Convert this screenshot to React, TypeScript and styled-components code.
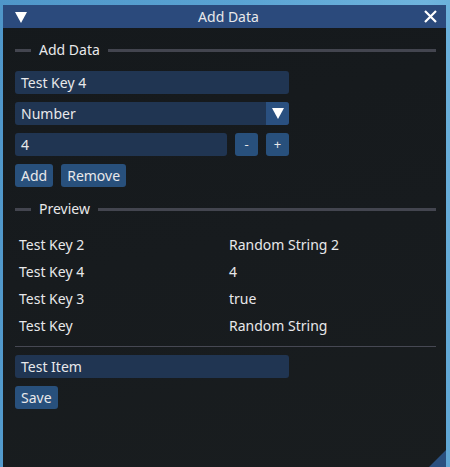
import styled, { createGlobalStyle } from "styled-components";

const GlobalStyle = createGlobalStyle`
  html, body {
    margin: 0;
    padding: 0;
    height: 100%;
    overflow: hidden;
  }
  body {
    background: linear-gradient(100deg, #4f96c9 0%, #5aa3d3 45%, #6fb4dd 80%, #5fa6d4 100%);
    font-family: "Noto Sans", "Open Sans", sans-serif;
    font-size: 14px;
    color: #e8e8ea;
  }
`;

type Row = { key: string; value: string };

const rows: Row[] = [
  { key: "Test Key 2", value: "Random String 2" },
  { key: "Test Key 4", value: "4" },
  { key: "Test Key 3", value: "true" },
  { key: "Test Key", value: "Random String" },
];

const DownArrow = ({ size = 12 }: { size?: number }) => (
  <svg width={size} height={size - 1} viewBox="0 0 12 11">
    <polygon points="0,0 12,0 6,11" fill="#ffffff" />
  </svg>
);

const App = () => {
  return (
    <>
      <GlobalStyle />
      <Desktop>
        <Window>
          <TitleBar>
            <TitleCollapse>
              <DownArrow />
            </TitleCollapse>
            <TitleText>Add Data</TitleText>
            <CloseBtn>
              <svg width="13" height="13" viewBox="0 0 13 13">
                <path d="M1 1 L12 12 M12 1 L1 12" stroke="#ffffff" strokeWidth="2.2" />
              </svg>
            </CloseBtn>
          </TitleBar>

          <Content>
            <SeparatorText>
              <SepStub />
              <span>Add Data</span>
              <SepLine />
            </SeparatorText>

            <Stack $top={12}>
              <Field $width={274}>Test Key 4</Field>

              <Combo>
                <span>Number</span>
                <ComboArrow>
                  <DownArrow />
                </ComboArrow>
              </Combo>

              <Inline>
                <Field $width={212}>4</Field>
                <SquareBtn>-</SquareBtn>
                <SquareBtn>+</SquareBtn>
              </Inline>

              <Inline>
                <Button>Add</Button>
                <Button>Remove</Button>
              </Inline>
            </Stack>

            <SeparatorText $top={13}>
              <SepStub />
              <span>Preview</span>
              <SepLine />
            </SeparatorText>

            <Table>
              {rows.map(r => (
                <TableRow key={r.key}>
                  <Cell>{r.key}</Cell>
                  <Cell>{r.value}</Cell>
                </TableRow>
              ))}
            </Table>

            <Divider />

            <Stack $top={8}>
              <Field $width={274}>Test Item</Field>
              <Inline>
                <Button>Save</Button>
              </Inline>
            </Stack>
          </Content>

          <ResizeGrip />
        </Window>
      </Desktop>
    </>
  );
};

export default App;

const Desktop = styled.div`
  height: 100vh;
  padding: 5px 4px 0 3px;
  box-sizing: border-box;
  display: flex;
`;

const Window = styled.div`
  position: relative;
  flex: 1;
  height: 480px;
  background: linear-gradient(170deg, #15191c 0%, #171b1e 50%, #191d1f 100%);
  display: flex;
  flex-direction: column;
  overflow: hidden;
`;

const TitleBar = styled.div`
  height: 23px;
  background: #2b4a7c;
  display: flex;
  align-items: center;
  position: relative;
  padding: 0 9px 0 12px;
`;

const TitleCollapse = styled.div`
  display: flex;
  align-items: center;
  width: 12px;
  height: 12px;
  padding-top: 1px;
`;

const TitleText = styled.div`
  flex: 1;
  text-align: center;
  line-height: 23px;
  padding-left: 6px;
`;

const CloseBtn = styled.div`
  display: flex;
  align-items: center;
  width: 13px;
  height: 13px;
`;

const Content = styled.div`
  padding: 13px 10px 0 12px;
  display: flex;
  flex-direction: column;
`;

const SeparatorText = styled.div<{ $top?: number }>`
  display: flex;
  align-items: center;
  gap: 8px;
  height: 18px;
  margin-top: ${p => p.$top ?? 0}px;
  line-height: 18px;
`;

const SepStub = styled.div`
  width: 16px;
  height: 3px;
  background: #43454f;
`;

const SepLine = styled.div`
  flex: 1;
  height: 3px;
  background: #43454f;
`;

const Stack = styled.div<{ $top: number }>`
  display: flex;
  flex-direction: column;
  gap: 8px;
  margin-top: ${p => p.$top}px;
`;

const Inline = styled.div`
  display: flex;
  gap: 8px;
`;

const Field = styled.div<{ $width: number }>`
  width: ${p => p.$width}px;
  height: 23px;
  box-sizing: border-box;
  background: #203552;
  border-radius: 3px;
  padding: 0 6px;
  line-height: 23px;
`;

const Combo = styled.div`
  width: 274px;
  height: 23px;
  box-sizing: border-box;
  background: #203552;
  border-radius: 3px;
  padding-left: 6px;
  display: flex;
  align-items: center;
  justify-content: space-between;
  overflow: hidden;
`;

const ComboArrow = styled.div`
  width: 23px;
  height: 23px;
  background: #2a5080;
  display: flex;
  align-items: center;
  justify-content: center;
`;

const Button = styled.div`
  height: 23px;
  box-sizing: border-box;
  background: #28507c;
  border-radius: 3px;
  padding: 0 6px;
  line-height: 23px;
`;

const SquareBtn = styled(Button)`
  width: 23px;
  padding: 0;
  text-align: center;
  font-size: 13px;
`;

const Table = styled.div`
  display: flex;
  flex-direction: column;
  margin-top: 13px;
`;

const TableRow = styled.div`
  display: grid;
  grid-template-columns: 210px 1fr;
  height: 27px;
  align-items: center;
`;

const Cell = styled.div`
  padding-left: 4px;
`;

const Divider = styled.div`
  height: 1px;
  background: #464853;
  margin-top: 7px;
`;

const ResizeGrip = styled.div`
  position: absolute;
  right: 0;
  top: 445px;
  width: 0;
  height: 0;
  border-style: solid;
  border-width: 0 0 35px 35px;
  border-color: transparent transparent #2a5080 transparent;
`;
